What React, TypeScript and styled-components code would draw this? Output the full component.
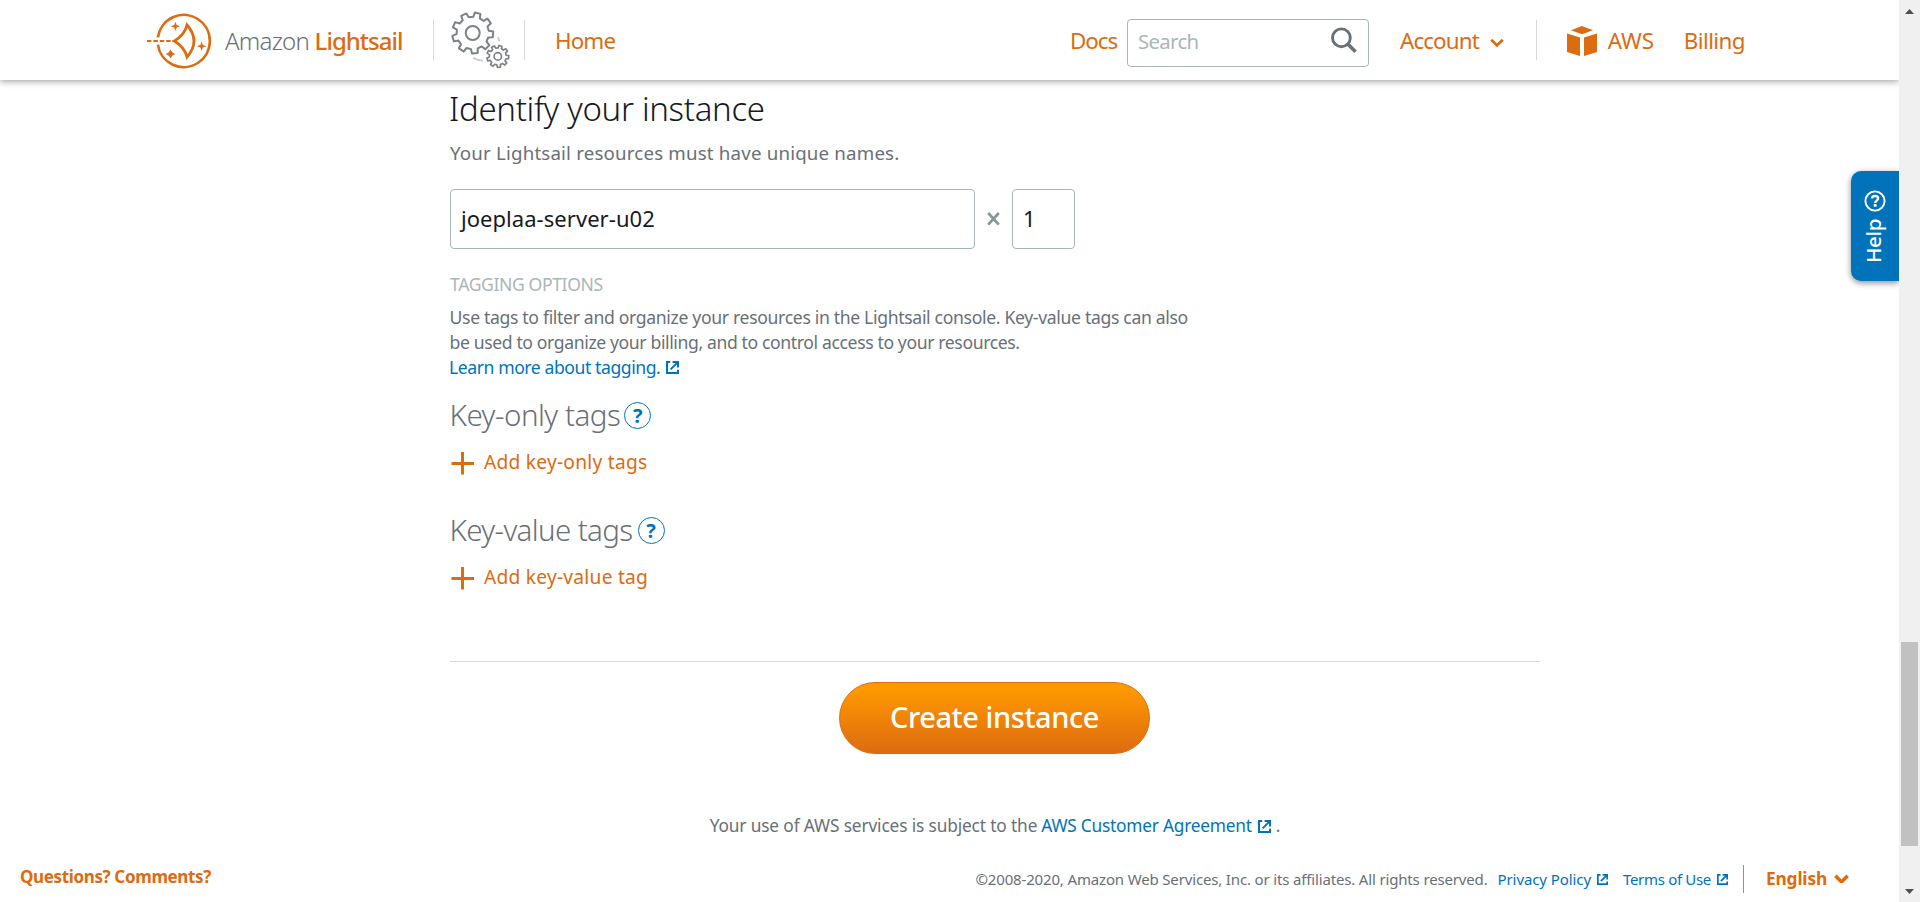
import React from 'react';
import styled, { createGlobalStyle } from 'styled-components';

const orange = '#dd6b10';
const blue = '#0073bb';
const gray = '#687078';
const silver = '#aab7b8';

const GlobalStyle = createGlobalStyle`
  *, *::before, *::after { box-sizing: border-box; }
  html, body { margin: 0; background: #fff; overflow: hidden; }
  body { font-family: 'Noto Sans', 'Open Sans', sans-serif; color: ${gray}; }
  h1, h2, h3, p { margin: 0; font-weight: inherit; }
  button, input { font-family: inherit; }
  a { text-decoration: none; color: inherit; }
  svg { display: block; flex: none; }
`;

const Screen = styled.div`
  display: flex;
  width: 1920px;
  height: 902px;
  overflow: hidden;
`;

const Page = styled.div`
  position: relative;
  display: flex;
  flex-direction: column;
  width: 1899px;
  overflow: hidden;
`;

/* Header */

const Header = styled.header`
  position: relative;
  flex: none;
  display: flex;
  align-items: center;
  height: 80px;
  padding-left: 147px;
  background: #fff;
  box-shadow: 0 1px 7px rgba(0, 0, 0, 0.42);
  clip-path: inset(0 0 -14px 0);
  white-space: nowrap;
`;

const Brand = styled.a`
  display: flex;
  align-items: center;
  width: 286px;
  padding-top: 1px;
`;

const BrandName = styled.span`
  margin-left: 13px;
  font-size: 24px;
  font-weight: 300;
  line-height: 34px;
  letter-spacing: -0.031em;
  color: ${gray};
`;

const BrandStrong = styled.span`
  font-weight: 500;
  letter-spacing: -0.0405em;
  color: ${orange};
`;

const Divider = styled.span<{ $height?: number; $color?: string }>`
  flex: none;
  width: 1px;
  height: ${p => p.$height ?? 40}px;
  background: ${p => p.$color ?? '#d5dbdb'};
`;

const GearsSlot = styled.div`
  width: 90px;
  padding-left: 16px;
`;

const NavLink = styled.a<{ $gap?: number; $tracking?: number; $width?: number }>`
  margin: 2px 0 0 ${p => p.$gap ?? 0}px;
  width: ${p => (p.$width ? `${p.$width}px` : 'auto')};
  font-size: 22.4px;
  line-height: 32px;
  letter-spacing: ${p => p.$tracking ?? -0.04}em;
  color: ${orange};
`;

const SearchBox = styled.label`
  display: flex;
  align-items: center;
  justify-content: space-between;
  width: 242px;
  height: 48px;
  margin: 6px 0 0 8px;
  padding: 0 11px 6px 10px;
  border: 1px solid ${silver};
  border-radius: 4px;
`;

const SearchHint = styled.span`
  padding-top: 2px;
  font-size: 20.4px;
  line-height: 28px;
  letter-spacing: -0.033em;
  color: ${silver};
`;

const CubeSlot = styled.span`
  margin: 2px 0 0 30px;
`;

const ChevronSlot = styled.span<{ $gap: number; $after: number }>`
  margin: 6px ${p => p.$after}px 0 ${p => p.$gap}px;
`;

/* Main form */

const Main = styled.main`
  width: 1090px;
  margin-left: 450px;
  padding-top: 7px;
  white-space: nowrap;
`;

const Title = styled.h1`
  font-size: 33px;
  font-weight: 300;
  line-height: 44px;
  letter-spacing: -0.0095em;
  color: #16191f;
  text-indent: -1px;
`;

const Lead = styled.p`
  margin-top: 9px;
  font-size: 18.7px;
  line-height: 26px;
  letter-spacing: 0.0098em;
`;

const NameRow = styled.div`
  display: flex;
  align-items: center;
  margin-top: 23px;
`;

const Field = styled.div<{ $width: number }>`
  width: ${p => p.$width}px;
  height: 60px;
  padding-left: 10px;
  border: 1px solid ${silver};
  border-radius: 4px;
  font-size: 22px;
  line-height: 56px;
  letter-spacing: 0.0022em;
  color: #16191f;
`;

const Times = styled.span`
  display: flex;
  justify-content: center;
  width: 37px;
`;

const SectionLabel = styled.h2`
  margin-top: 23px;
  font-size: 17.6px;
  line-height: 25px;
  letter-spacing: -0.0225em;
  color: ${silver};
`;

const Description = styled.p`
  margin-top: 8px;
  font-size: 17.6px;
  line-height: 25px;
  text-indent: -0.5px;
`;

const Line = styled.span<{ $tracking?: number }>`
  display: block;
  letter-spacing: ${p => p.$tracking ?? -0.0188}em;
`;

const ExternalLink = styled.a<{ $gap?: number; $iconGap?: number; $tracking?: number }>`
  display: inline-flex;
  align-items: center;
  gap: ${p => p.$iconGap ?? 6}px;
  margin-left: ${p => p.$gap ?? 0}px;
  letter-spacing: ${p => p.$tracking ?? -0.02}em;
  color: ${blue};
`;

const TagGroup = styled.section<{ $gap: number }>`
  margin-top: ${p => p.$gap}px;
`;

const TagTitle = styled.h3<{ $tracking: number; $gap: number }>`
  display: flex;
  align-items: center;
  gap: ${p => p.$gap}px;
  font-size: 29.5px;
  font-weight: 300;
  line-height: 40px;
  letter-spacing: ${p => p.$tracking}em;
  text-indent: -0.5px;
`;

const HelpDot = styled.span`
  display: flex;
  align-items: center;
  justify-content: center;
  width: 27px;
  height: 27px;
  margin-top: 1px;
  border: 1.5px solid ${blue};
  border-radius: 50%;
  font-size: 20px;
  font-weight: 700;
  line-height: 22px;
  letter-spacing: 0;
  text-indent: 0;
  color: ${blue};
`;

const AddButton = styled.a`
  display: flex;
  align-items: center;
  gap: 10px;
  height: 28px;
  margin-top: 13px;
  font-size: 19.2px;
  line-height: 28px;
  letter-spacing: 0.0122em;
  color: ${orange};
`;

const PlusSlot = styled.span`
  margin-top: 2px;
`;

const Submit = styled.div`
  display: flex;
  justify-content: center;
  margin-top: 70px;
  padding-top: 20px;
  border-top: 1px solid #d5dbdb;
`;

const CreateButton = styled.button`
  width: 311px;
  height: 72px;
  margin-left: -1px;
  padding: 0 0 2px;
  border: 1px solid ${orange};
  border-radius: 36px;
  background: linear-gradient(#ff9900, #ff9900 8%, ${orange});
  font-size: 29px;
  font-weight: 500;
  line-height: 40px;
  letter-spacing: -0.0149em;
  color: #fff;
`;

const Agreement = styled.p`
  display: flex;
  justify-content: center;
  margin-top: 60px;
  font-size: 17.3px;
  line-height: 24px;
  letter-spacing: -0.0078em;
`;

const Period = styled.span`
  margin-left: 5px;
`;

/* Footer */

const Footer = styled.footer`
  display: flex;
  align-items: center;
  margin-top: auto;
  height: 46px;
  padding: 0 50px 0 20px;
  white-space: nowrap;
`;

const Feedback = styled.a`
  margin: -5px auto 0 0;
  font-size: 17px;
  font-weight: 700;
  letter-spacing: -0.0215em;
  color: ${orange};
`;

const Legal = styled.div`
  display: flex;
  align-items: center;
  margin-right: 15px;
  font-size: 15px;
  line-height: 22px;
  letter-spacing: -0.0105em;
`;

const Language = styled.a`
  display: flex;
  align-items: center;
  gap: 7px;
  margin: -1px 0 0 22px;
  font-size: 17.3px;
  font-weight: 700;
  letter-spacing: -0.0088em;
  color: ${orange};
`;

/* Overlays and scrollbar */

const HelpTab = styled.button`
  position: absolute;
  top: 171px;
  right: 0;
  display: flex;
  flex-direction: column;
  align-items: center;
  gap: 7px;
  width: 48px;
  height: 110px;
  padding: 19px 0 0;
  border: 0;
  border-radius: 10px 0 0 10px;
  background: ${blue};
  box-shadow: 0 2px 6px rgba(0, 0, 0, 0.45);
  color: #fff;
`;

const HelpText = styled.span`
  writing-mode: vertical-rl;
  transform: rotate(180deg);
  margin-right: 4px;
  font-size: 20.6px;
  font-weight: 500;
  line-height: 28px;
  letter-spacing: -0.02em;
`;

const Scrollbar = styled.div`
  display: flex;
  flex-direction: column;
  align-items: center;
  width: 21px;
  padding: 9px 0 8px;
  background: #f0f0f0;
`;

const Thumb = styled.div`
  width: 17px;
  height: 204px;
  margin: 628px 0 auto;
  background: #c1c1c1;
`;

const Star = ({ x, y, r, w = 1.2 }: { x: number; y: number; r: number; w?: number }) => (
  <path
    d={`M${x} ${y - r}L${x + w} ${y - w}L${x + r} ${y}L${x + w} ${y + w}L${x} ${y + r}L${x - w} ${y + w}L${x - r} ${y}L${x - w} ${y - w}Z`}
    fill={orange}
  />
);

const LightsailLogo = () => (
  <svg width="65" height="58" viewBox="147 12 65 58" fill="none" stroke={orange} strokeWidth="2.6">
    <path d="M157.9 37.4A26.1 26.1 0 1 1 157.9 44.6" />
    <path d="M147 41H173" strokeWidth="2.2" strokeDasharray="4.4 2" />
    <path d="M174.4 41Q184.8 34.5 187 25Q201 41 187 57Q184.8 47.5 174.4 41Z" strokeWidth="2.8" />
    <g stroke="none">
      <Star x={175.4} y={26.3} r={4.6} />
      <Star x={201.6} y={46.2} r={4.8} />
      <Star x={170.5} y={54} r={4.6} w={1.7} />
    </g>
  </svg>
);

const gearPath = (cx: number, cy: number, outer: number, root: number, teeth: number, phase: number) => {
  const step = 360 / teeth;
  const point = (r: number, deg: number) => {
    const a = (deg * Math.PI) / 180;
    return `${(cx + r * Math.cos(a)).toFixed(2)} ${(cy + r * Math.sin(a)).toFixed(2)}`;
  };
  const points: string[] = [];
  for (let i = 0; i < teeth; i++) {
    const mid = phase + i * step;
    points.push(
      point(root, mid - step * 0.3),
      point(outer, mid - step * 0.2),
      point(outer, mid + step * 0.2),
      point(root, mid + step * 0.3),
    );
  }
  return `M${points.join('L')}Z`;
};

const Gears = () => (
  <svg width="60" height="60" viewBox="450 10 60 60" fill="none" stroke="#7d8288" strokeLinejoin="round">
    <path d={gearPath(472.7, 33, 20.6, 16.2, 9, -76)} strokeWidth="2" />
    <circle cx="472.7" cy="33" r="7" strokeWidth="2" />
    <path d={gearPath(497.8, 56.4, 11, 8.5, 9, -76)} strokeWidth="1.7" />
    <circle cx="497.8" cy="56.4" r="3.7" strokeWidth="1.7" />
    <path d="M497.8 37.2Q499 39 499.2 41.2M473 57.8Q477.5 60.6 482.8 60.6" stroke="#c9cccf" strokeWidth="1.8" />
  </svg>
);

const SearchIcon = () => (
  <svg width="26" height="26" viewBox="0 0 26 26" fill="none" stroke={gray}>
    <circle cx="10.4" cy="10.8" r="8.9" strokeWidth="2.9" />
    <path d="M16.4 16.8L24.6 24.7" strokeWidth="3.6" />
  </svg>
);

const Chevron = ({ width, stroke }: { width: number; stroke: number }) => (
  <svg width={width} height={width * 0.66} viewBox="0 0 15 10" fill="none" stroke={orange} strokeWidth={stroke}>
    <path d="M1.3 1.8L7.5 8L13.7 1.8" />
  </svg>
);

const AwsCube = () => (
  <svg width="30" height="30" viewBox="0 0 30 30" fill={orange}>
    <path d="M4 4.2L15 0L26 4.2L15 8.2Z" />
    <path d="M0 7.4L13 11.6V30L0 26Z" />
    <path d="M30 7.4L17 11.6V30L30 26Z" />
  </svg>
);

const ExternalIcon = ({ size = 13 }: { size?: number }) => (
  <svg width={size} height={size} viewBox="0 0 13 13" fill="none" stroke={blue} strokeWidth="2">
    <path d="M4.2 1H1V12H12V8.8" />
    <path d="M6.6 1H12V6.4M11.6 1.4L4.6 8.4" />
  </svg>
);

const Plus = () => (
  <svg width="24" height="24" viewBox="0 0 24 24" stroke={orange} strokeWidth="3">
    <path d="M12.5 1V23.5M1.5 12.5H24" />
  </svg>
);

const TimesIcon = () => (
  <svg width="14" height="14" viewBox="0 0 14 14" stroke="#879596" strokeWidth="2.7">
    <path d="M1.2 1L11.8 12.6M11.8 1L1.2 12.6" />
  </svg>
);

const HelpCircle = () => (
  <svg width="22" height="22" viewBox="0 0 22 22" fill="none" stroke="#fff">
    <circle cx="11" cy="11" r="9.6" strokeWidth="1.9" />
    <path d="M8 8.6C8 6.8 9.3 6 11 6C12.9 6 14.1 7 14.1 8.5C14.1 10.6 11.2 10.6 11.2 12.9" strokeWidth="2.4" />
    <path d="M9.7 15.4H12.6" strokeWidth="2.6" />
  </svg>
);

const ScrollArrow = ({ down }: { down?: boolean }) => (
  <svg width="9" height="5" viewBox="0 0 9 5" fill="#505050">
    <path d={down ? 'M0 0H9L4.5 5Z' : 'M0 5H9L4.5 0Z'} />
  </svg>
);

export default function App() {
  return (
    <>
      <GlobalStyle />
      <Screen>
        <Page>
          <Header>
            <Brand>
              <LightsailLogo />
              <BrandName>
                Amazon <BrandStrong>Lightsail</BrandStrong>
              </BrandName>
            </Brand>
            <Divider />
            <GearsSlot>
              <Gears />
            </GearsSlot>
            <Divider />
            <NavLink $gap={30} $width={515}>Home</NavLink>
            <NavLink $tracking={-0.047} $width={49}>Docs</NavLink>
            <SearchBox>
              <SearchHint>Search</SearchHint>
              <SearchIcon />
            </SearchBox>
            <NavLink $gap={31}>Account</NavLink>
            <ChevronSlot $gap={11} $after={32}>
              <Chevron width={14} stroke={3} />
            </ChevronSlot>
            <Divider />
            <CubeSlot>
              <AwsCube />
            </CubeSlot>
            <NavLink $gap={11} $tracking={-0.008} $width={76}>AWS</NavLink>
            <NavLink $tracking={-0.027}>Billing</NavLink>
          </Header>

          <Main>
            <Title>Identify your instance</Title>
            <Lead>Your Lightsail resources must have unique names.</Lead>
            <NameRow>
              <Field $width={525}>joeplaa-server-u02</Field>
              <Times>
                <TimesIcon />
              </Times>
              <Field $width={63}>1</Field>
            </NameRow>

            <SectionLabel>TAGGING OPTIONS</SectionLabel>
            <Description>
              <Line>Use tags to filter and organize your resources in the Lightsail console. Key-value tags can also</Line>
              <Line $tracking={-0.0216}>be used to organize your billing, and to control access to your resources.</Line>
              <Line>
                <ExternalLink $tracking={-0.0245}>
                  Learn more about tagging.
                  <ExternalIcon />
                </ExternalLink>
              </Line>
            </Description>

            <TagGroup $gap={15}>
              <TagTitle $tracking={-0.0165} $gap={4}>
                Key-only tags <HelpDot>?</HelpDot>
              </TagTitle>
              <AddButton>
                <PlusSlot>
                  <Plus />
                </PlusSlot>
                Add key-only tags
              </AddButton>
            </TagGroup>

            <TagGroup $gap={34}>
              <TagTitle $tracking={-0.0213} $gap={5}>
                Key-value tags <HelpDot>?</HelpDot>
              </TagTitle>
              <AddButton>
                <PlusSlot>
                  <Plus />
                </PlusSlot>
                Add key-value tag
              </AddButton>
            </TagGroup>

            <Submit>
              <CreateButton>Create instance</CreateButton>
            </Submit>
            <Agreement>
              Your use of AWS services is subject to the
              <ExternalLink $gap={4} $tracking={-0.0125}>
                AWS Customer Agreement
                <ExternalIcon />
              </ExternalLink>
              <Period>.</Period>
            </Agreement>
          </Main>

          <Footer>
            <Feedback>Questions? Comments?</Feedback>
            <Legal>
              ©2008-2020, Amazon Web Services, Inc. or its affiliates. All rights reserved.
              <ExternalLink $gap={10} $tracking={-0.0056}>
                Privacy Policy
                <ExternalIcon size={11} />
              </ExternalLink>
              <ExternalLink $gap={15} $tracking={-0.0212}>
                Terms of Use
                <ExternalIcon size={11} />
              </ExternalLink>
            </Legal>
            <Divider $height={28} $color="#879596" />
            <Language>
              English
              <Chevron width={15} stroke={3.6} />
            </Language>
          </Footer>

          <HelpTab>
            <HelpCircle />
            <HelpText>Help</HelpText>
          </HelpTab>
        </Page>

        <Scrollbar>
          <ScrollArrow />
          <Thumb />
          <ScrollArrow down />
        </Scrollbar>
      </Screen>
    </>
  );
}
